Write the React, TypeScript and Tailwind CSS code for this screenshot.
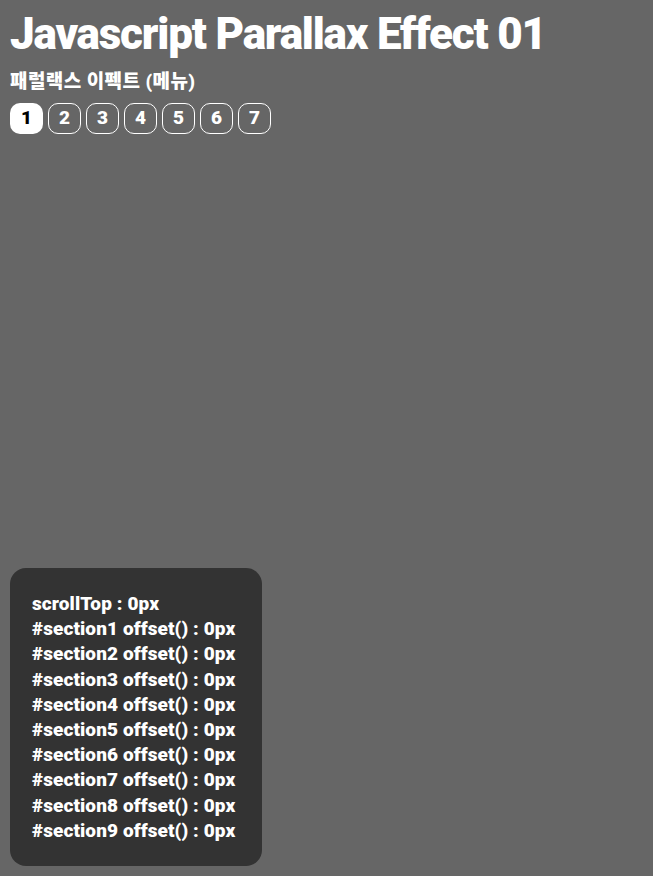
import React from 'react';

const menus = [1, 2, 3, 4, 5, 6, 7];
const rows = ['scrollTop : 0px', ...Array.from({ length: 9 }, (_, i) => `#section${i + 1} offset() : 0px`)];

const App = () => {
  return <div className="min-h-screen h-[876px] bg-[#666666] text-white flex flex-col px-[10px] pb-[10px]" style={{ fontFamily: 'Roboto, "Noto Sans CJK KR", sans-serif' }}>
      <header className="pt-[9px]">
        <h1 className="text-[44px] leading-[50px] font-black tracking-[-1.2px]">Javascript Parallax Effect 01</h1>
        <h2 className="mt-[12px] text-[19px] leading-[22px] font-black tracking-[0.4px]">패럴랙스 이펙트 (메뉴)</h2>
        <nav className="mt-[10px] flex gap-[5px]">
          {menus.map(n => <a key={n} href="#" className={n === 1 ? 'w-[33px] h-[31px] flex items-center justify-center rounded-[10px] bg-white text-black text-[19px] font-black' : 'w-[33px] h-[31px] flex items-center justify-center rounded-[10px] border border-white text-white text-[19px] font-black'}>{n}</a>)}
        </nav>
      </header>

      <aside className="mt-auto w-[252px] h-[298px] rounded-[16px] bg-[#333333] pl-[22px] pt-[23px]">
        {rows.map(r => <p key={r} className="text-[19px] leading-[25.2px] font-black tracking-[0.1px] whitespace-nowrap">{r}</p>)}
      </aside>
    </div>;
};

export default App;
